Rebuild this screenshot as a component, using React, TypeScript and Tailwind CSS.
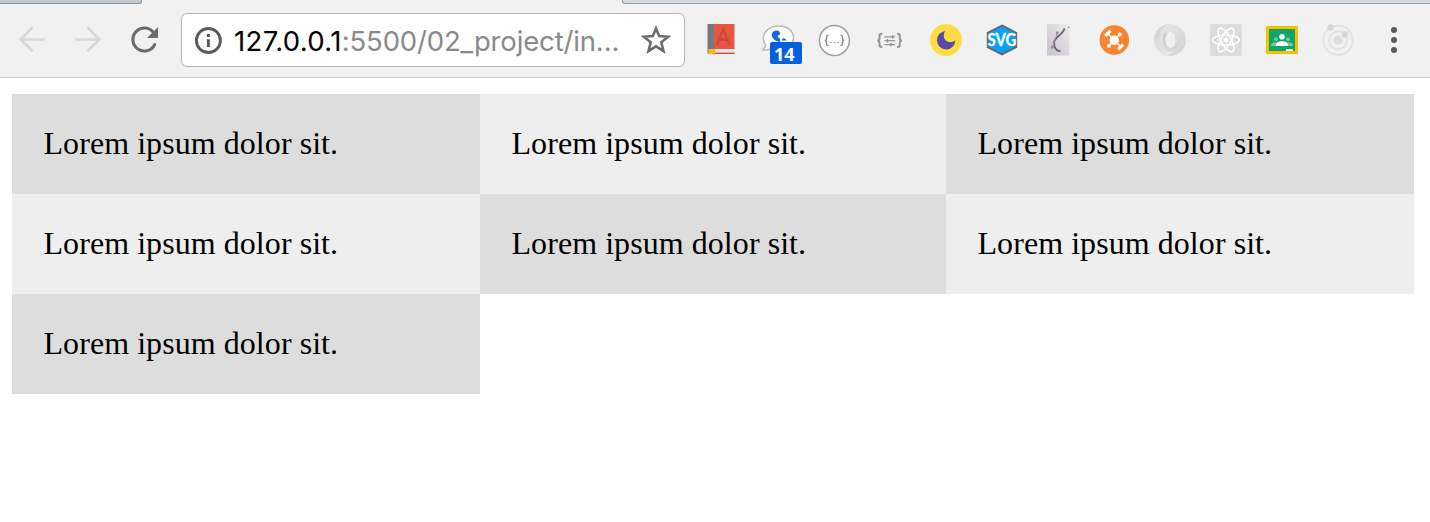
import type { ReactNode } from "react";

function Icon({ children }: { children: ReactNode }) {
  return (
    <svg viewBox="0 0 32 32" className="h-8 w-8 shrink-0 overflow-visible" fill="none">
      {children}
    </svg>
  );
}

function Tabs() {
  return (
    <div className="flex h-1 shrink-0 justify-between">
      <div className="w-[142px] rounded-br-[3px] border-r border-b border-[#8f9398] bg-[#c1c8ce]" />
      <div className="w-[808px] rounded-bl-[3px] border-b border-l border-[#9a9da1] bg-[#d4d9df]" />
    </div>
  );
}

function Navigation() {
  return (
    <div className="flex gap-6 pl-4">
      <Icon>
        <path d="M27.5 15.5H5M15.8 4.3 4.5 15.5l11.3 11" stroke="#d8d8d8" strokeWidth="2.7" strokeLinecap="round" />
      </Icon>
      <Icon>
        <path d="M4.5 15.5H27M16.2 4.3l11.3 11.2-11.3 11" stroke="#d8d8d8" strokeWidth="2.7" strokeLinecap="round" />
      </Icon>
      <Icon>
        <path d="M25.5 8.5A11.5 11.5 0 1 0 26.7 20.600" stroke="#6b6b6b" strokeWidth="3.1" strokeLinecap="round" />
        <path d="M30 3v11H19Z" fill="#6b6b6b" />
      </Icon>
    </div>
  );
}

function AddressBar() {
  return (
    <div className="ml-[21px] flex h-[54px] w-[504px] items-center rounded-[6px] border border-[#b4b4b4] bg-white pl-[10px]">
      <Icon>
        <circle cx="16.4" cy="16.5" r="12" stroke="#5a5a5a" strokeWidth="2.9" />
        <path d="M16.4 10v3M16.4 15.2v7.8" stroke="#5a5a5a" strokeWidth="3" />
      </Icon>
      <div className="ml-[10px] w-[406px] pt-0.5 font-['Inter',sans-serif] text-[27.5px] leading-8 tracking-[-0.15px] whitespace-nowrap text-[#8a8a8a]">
        <span className="tracking-[0.35px] text-black">127.0.0.1</span>:5500/02_project/in...
      </div>
      <Icon>
        <path
          d="m16 4.5 3.1 7.6 9 .7-6.8 5.5 2.2 8.8L16 22.4l-7.5 4.7 2.2-8.8-6.8-5.5 9-.7Z"
          stroke="#6c6c6c"
          strokeWidth="2.6"
        />
      </Icon>
    </div>
  );
}

function DictionaryIcon() {
  return (
    <Icon>
      <path d="M8 0h20.5v25H8Z" fill="#e95743" />
      <path d="M1.5 0H8v25l-6.5 5Z" fill="#747a7e" />
      <path d="M4 25h24.5v4H4Z" fill="#e5e8e8" />
      <path d="M6 29.3h22.5" stroke="#e24a38" strokeWidth="1.4" />
      <path d="M2.5 25h6.500v6.500l-2.700-2L2.500 31Z" fill="#f6b91e" />
      <path d="m10.8 20.7 6.4-15.4 6.4 15.4M13.4 15.5h7.8" stroke="#c94b3b" strokeWidth="2.8" />
    </Icon>
  );
}

function MessagesIcon() {
  return (
    <div className="relative h-8 w-8">
      <Icon>
        <path
          d="M17 2C8 2 1.3 7.5 1.3 14.5c0 4 1.5 5.3 2.5 7L.7 26c5 .4 8.5-1 10.3-2.4C24 25 31.5 21 31.5 14 31.5 7 25.5 2 17 2Z"
          fill="#fcfcfc"
          stroke="#bababa"
          strokeWidth="1.5"
        />
        <path d="M14.500 6.500c-5 .5-6 5-3.200 8 2 2.600 5 3.500 7.200 3l-1-3.500c-2 0-2-2-1-3l1.500-.5c.5-2-1-4-3.500-4Z" fill="#1269d8" />
        <path d="M20 16.500c0-3 3-3 4.500 0Z" fill="#1269d8" />
      </Icon>
      <div className="absolute top-[18px] left-2 flex h-[22px] w-8 items-center rounded-[2px] bg-[#0560de] pt-0.5 pl-1 font-['Open_Sans',sans-serif] text-[18px] font-bold text-white">
        14
      </div>
    </div>
  );
}

function JsonIcon() {
  return (
    <Icon>
      <circle cx="16.4" cy="16.5" r="15" fill="white" stroke="#a0a0a0" strokeWidth="1.5" />
      <path
        d="M10.5 11.5H10c-1.2 0-1.5.6-1.5 1.6v1.5c0 1.2-.5 1.9-1.7 1.9 1.2 0 1.7.7 1.7 1.9v1.5c0 1 .3 1.6 1.5 1.6h.5M22.5 11.5h.5c1.2 0 1.5.6 1.5 1.6v1.5c0 1.2.5 1.9 1.7 1.9-1.2 0-1.7.7-1.7 1.9v1.5c0 1-.3 1.6-1.5 1.6h-.5"
        stroke="#8e8e8e"
        strokeWidth="1.4"
      />
      <g fill="#8e8e8e">
        <circle cx="13" cy="18.5" r=".8" />
        <circle cx="16.5" cy="18.5" r=".8" />
        <circle cx="20" cy="18.5" r=".8" />
      </g>
    </Icon>
  );
}

function BraceSettingsIcon() {
  return (
    <Icon>
      <path
        d="M8.3 9.7h-.8c-1.5 0-2 .7-2 2v2.2c0 1.6-.6 2.5-2.3 2.5 1.7 0 2.3.9 2.3 2.5v2.2c0 1.3.5 2 2 2h.8M23 9.7h.8c1.5 0 2 .7 2 2v2.2c0 1.6.6 2.5 2.3 2.5-1.7 0-2.3.9-2.3 2.5v2.2c0 1.3-.5 2-2 2H23"
        stroke="#969696"
        strokeWidth="2"
      />
      <path d="M10.5 12.8h10.7M10.5 16.7h10.7M10.5 20.6h10.7" stroke="#969696" strokeWidth="1.2" />
      <path d="M18.7 11v3.5M13.5 15v3.5M17 19v3.3" stroke="#969696" strokeWidth="1.5" />
    </Icon>
  );
}

function MoonIcon() {
  return (
    <Icon>
      <circle cx="16" cy="16" r="16" fill="#ffdb43" />
      <path d="M15.5 7A9.2 9.2 0 1 0 25.3 16.2 6.1 6.1 0 1 1 15.5 7Z" fill="#5948a6" />
    </Icon>
  );
}

function SvgIcon() {
  return (
    <Icon>
      <path d="m16 1.5 14.2 7.3v14.4L16 30.5 1.8 23.2V8.8Z" fill="#06a2fa" stroke="#626a6f" strokeWidth="2" />
      <text
        x="1.5"
        y="22"
        fill="white"
        stroke="white"
        strokeWidth=".3"
        textLength="29"
        lengthAdjust="spacingAndGlyphs"
        className="font-['Lato',sans-serif] text-[16.5px] font-bold"
      >
        SVG
      </text>
    </Icon>
  );
}

function VectorIcon() {
  return (
    <Icon>
      <defs>
        <linearGradient id="paper" x1="1" y1="0" x2="0" y2="1">
          <stop stopColor="#eeecef" />
          <stop offset="1" stopColor="#c8c1cb" />
        </linearGradient>
      </defs>
      <path d="M5 0h19.5v3h3v28.5H5Z" fill="url(#paper)" />
      <path d="M22.500 4.500C21 11 12 12.500 12 19c0 5 3 8.500 6.500 8.200" stroke="#6f6571" strokeWidth="1.800" />
      <path d="M15.5 9 10 23.500" stroke="#96909c" strokeWidth=".9" />
      <path d="M14 7.500h2.500V10H14ZM9 22h2.500v2.500H9ZM26 2.500h1.500V4H26Z" fill="#8c8f9d" />
    </Icon>
  );
}

function HubIcon() {
  return (
    <Icon>
      <circle cx="16.3" cy="16" r="14.8" fill="#f8842f" />
      <circle cx="16.3" cy="16.3" r="4.7" fill="white" />
      <path d="m9.500 9.500 14 14M10.700 22l11-11.700" stroke="white" strokeWidth="1.400" />
      <path d="m7.200 12 5.300-5.300M20.300 25.300l4.800-4.800" stroke="white" strokeWidth="3.200" />
      <circle cx="21.700" cy="10.500" r="2" fill="white" />
      <circle cx="11" cy="21.700" r="2" fill="white" />
    </Icon>
  );
}

function RingIcon() {
  return (
    <Icon>
      <defs>
        <linearGradient id="ringLeft" x1="0" y1="0" x2=".6" y2="1">
          <stop stopColor="#d0d0d0" />
          <stop offset="1" stopColor="#e8e8e8" />
        </linearGradient>
        <linearGradient id="ringRight" x1="0" y1="0" x2="1" y2="1">
          <stop stopColor="#e8e8e8" />
          <stop offset="1" stopColor="#d2d2d2" />
        </linearGradient>
      </defs>
      <circle cx="16" cy="16" r="16" fill="url(#ringRight)" />
      <path d="M16 0C6 3 3 13 8 22c2.500 4.500 7 7 11 5-2 3.500-6 5-8 4.200A16 16 0 0 1 16 0Z" fill="url(#ringLeft)" />
      <path d="M10 10c-3 9 2 16 10 14 4-1.500 6-6 5-11 0 6-3 11-8 11-6 0-8-8-4-15-1.500 0-2.500 0-3 1Z" fill="#cacaca" />
      <ellipse cx="16.500" cy="16" rx="4.800" ry="8" fill="#f1f1f1" />
    </Icon>
  );
}

function AtomIcon() {
  return (
    <Icon>
      <rect width="32" height="32" rx="2" fill="#dcdcdc" />
      <g stroke="white" strokeWidth="1.5">
        <ellipse cx="16" cy="16" rx="13.3" ry="5" />
        <ellipse cx="16" cy="16" rx="13.3" ry="5" transform="rotate(60 16 16)" />
        <ellipse cx="16" cy="16" rx="13.3" ry="5" transform="rotate(120 16 16)" />
      </g>
      <circle cx="16" cy="16" r="2.5" fill="white" />
    </Icon>
  );
}

function ClassroomIcon() {
  return (
    <Icon>
      <rect y="2" width="32" height="28" rx="1.5" fill="#fbbc04" />
      <rect x="3" y="5" width="26" height="22" fill="#0fa768" />
      <g fill="#70c7a1">
        <circle cx="10" cy="15.2" r="2" />
        <circle cx="22" cy="15.2" r="2" />
        <path d="M5 22v-1.5c0-1.5 2.5-2.3 5-2.3V22ZM22 18.2c2.5 0 5 .8 5 2.3V22h-5Z" />
      </g>
      <circle cx="16" cy="12.8" r="2.8" fill="white" />
      <path d="M10 22v-1.7c0-2 3-3 6-3s6 1 6 3V22Z" fill="white" />
      <path d="M20 25.2h7V27h-7Z" fill="white" />
    </Icon>
  );
}

function OrbitIcon() {
  return (
    <Icon>
      <g stroke="#e0e0e0" strokeWidth="1.8">
        <circle cx="16" cy="16.3" r="14.7" />
        <circle cx="16" cy="16.3" r="9" />
      </g>
      <circle cx="16" cy="16.3" r="4.5" fill="#dedede" />
      <circle cx="8.5" cy="3.5" r="3.2" fill="#d6d6d6" />
      <circle cx="22.8" cy="10.2" r="3.2" fill="#d6d6d6" />
    </Icon>
  );
}

function Extensions() {
  return (
    <div className="ml-[21px] flex gap-6">
      <DictionaryIcon />
      <MessagesIcon />
      <JsonIcon />
      <BraceSettingsIcon />
      <MoonIcon />
      <SvgIcon />
      <VectorIcon />
      <HubIcon />
      <RingIcon />
      <AtomIcon />
      <ClassroomIcon />
      <OrbitIcon />
      <Icon>
        <g fill="#5a5a5a">
          <circle cx="16" cy="6" r="3" />
          <circle cx="16" cy="16" r="3" />
          <circle cx="16" cy="26" r="3" />
        </g>
      </Icon>
    </div>
  );
}

const items = Array.from({ length: 7 }, () => "Lorem ipsum dolor sit.");

export default function App() {
  return (
    <div className="h-[522px] w-[1430px] overflow-hidden bg-white">
      <header className="flex h-[78px] flex-col border-b border-[#d2d2d2] bg-[#f1f1f1]">
        <Tabs />
        <div className="flex h-[72px] shrink-0 items-center">
          <Navigation />
          <AddressBar />
          <Extensions />
        </div>
      </header>
      <main className="grid grid-cols-[468px_466px_468px] px-3 pt-4">
        {items.map((text, index) => (
          <div
            key={index}
            className="flex h-[100px] items-center bg-[#eeeeee] pb-0.5 pl-[31.5px] font-['Liberation_Serif',serif] text-[32px] tracking-[0.06px] text-black odd:bg-[#dddddd]"
          >
            {text}
          </div>
        ))}
      </main>
    </div>
  );
}
